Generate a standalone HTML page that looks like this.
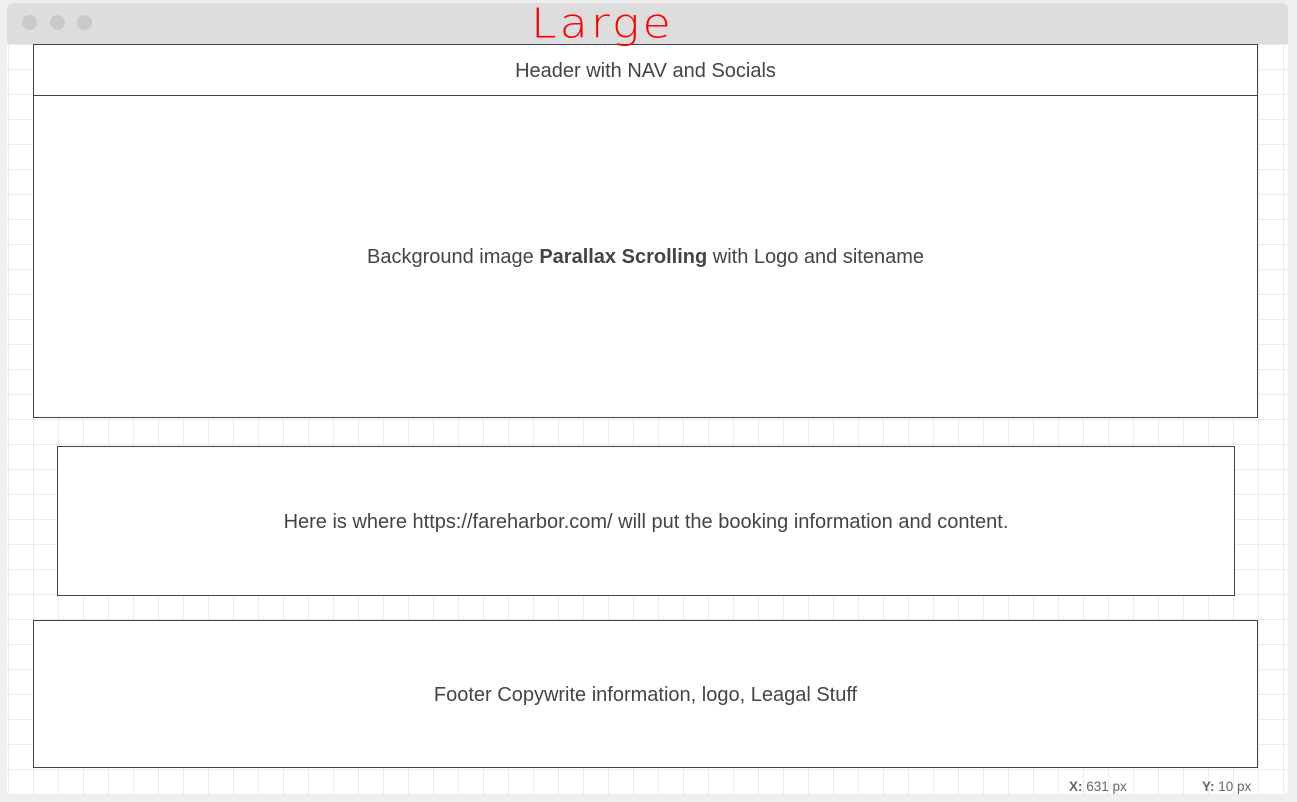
<!DOCTYPE html>
<html><head><meta charset="utf-8"><style>
body{margin:0;width:1297px;height:802px;background:#efefef;position:relative;overflow:hidden;font-family:"Liberation Sans",Arial,sans-serif;}
.win{position:absolute;left:7px;top:3px;width:1281px;height:792px;background:#fff;border-radius:6px;overflow:hidden;}
.grid{position:absolute;left:0;top:41px;right:0;bottom:0;
background-image:linear-gradient(to right,#ebebeb 1px,transparent 1px),linear-gradient(to bottom,#ebebeb 1px,transparent 1px);
background-size:25px 25px;background-position:1px 0;}
.tb{position:absolute;left:0;top:0;right:0;height:41px;background:#dddddd;}
.dot{position:absolute;top:12px;width:15px;height:15px;border-radius:50%;background:#c9c9c9;}
.box{position:absolute;background:#fff;border:1px solid #444;box-sizing:border-box;display:flex;align-items:center;justify-content:center;color:#444;font-size:20px;padding-top:2px;}
.lg{position:absolute;left:531px;top:-4px;color:#f00;font-size:46px;font-family:"DejaVu Sans",sans-serif;font-weight:200;letter-spacing:3px;transform:scaleY(0.9);}
.st{position:absolute;top:779px;font-size:13.5px;color:#666;}
</style></head><body>
<div class="win">
<div class="grid"></div>
<div class="tb"><div class="dot" style="left:15px"></div><div class="dot" style="left:43px"></div><div class="dot" style="left:70px"></div></div>
</div>
<div class="box" style="left:33px;top:44px;width:1225px;height:52px">Header with NAV and Socials</div>
<div class="box" style="left:33px;top:95px;width:1225px;height:323px">Background image&nbsp;<b>Parallax Scrolling</b>&nbsp;with Logo and sitename</div>
<div class="box" style="left:57px;top:446px;width:1178px;height:150px">Here is where https://fareharbor.com/ will put the booking information and content.</div>
<div class="box" style="left:33px;top:620px;width:1225px;height:148px">Footer Copywrite information, logo, Leagal Stuff</div>
<div class="lg">Large</div>
<div class="st" style="left:1069px"><b>X:</b> 631 px</div>
<div class="st" style="left:1202px"><b>Y:</b> 10 px</div>
</body></html>
